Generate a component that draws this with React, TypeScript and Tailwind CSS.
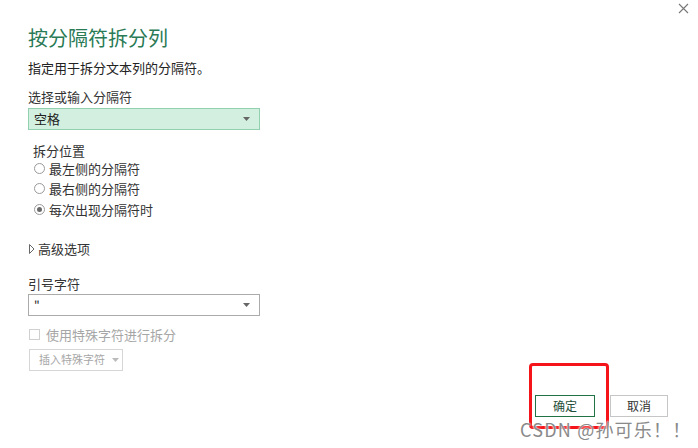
import React from "react";

const font = { fontFamily: '"Microsoft YaHei","Noto Sans CJK SC","Noto Sans",sans-serif' };

function Radio({ checked, label }: { checked?: boolean; label: string }) {
  return (
    <div className="flex items-center h-[20.5px]">
      <span className="w-[11px] h-[11px] rounded-full border border-[#9a9a9a] bg-white flex items-center justify-center ml-[6px]">
        {checked && <span className="w-[5px] h-[5px] rounded-full bg-[#6a6a6a]" />}
      </span>
      <span className="ml-[4px] text-[13px] text-[#333]">{label}</span>
    </div>
  );
}

function Caret({ color = "#666" }: { color?: string }) {
  return (
    <svg width="7" height="4" viewBox="0 0 7 4">
      <path d="M0 0 L7 0 L3.5 4 Z" fill={color} />
    </svg>
  );
}

export default function App() {
  return (
    <div className="relative w-[698px] h-[448px] bg-white overflow-hidden" style={font}>
      <svg className="absolute left-[678px] top-[3px]" width="11" height="11" viewBox="0 0 11 11">
        <path d="M1 1 L10 10 M10 1 L1 10" stroke="#777" strokeWidth="1.1" />
      </svg>

      <div className="flex flex-col pl-[28px] pt-[26px]">
        <div className="text-[20px] leading-[24px] text-[#2a7a56]">按分隔符拆分列</div>
        <div className="mt-[9px] text-[13px] leading-[18px] text-[#222]">指定用于拆分文本列的分隔符。</div>
        <div className="mt-[12px] text-[13px] leading-[16px] text-[#333]">选择或输入分隔符</div>
        <div className="mt-[3px] w-[232px] h-[22px] bg-[#d3efe0] border border-[#92d0b0] flex items-center justify-between pl-[5px] pr-[9px]">
          <span className="text-[13px] text-[#222]">空格</span>
          <Caret />
        </div>

        <div className="mt-[13px] ml-[5px] text-[13px] leading-[16px] text-[#333]">拆分位置</div>
        <div className="flex flex-col mt-[-1px]">
          <Radio label="最左侧的分隔符" />
          <Radio label="最右侧的分隔符" />
          <Radio checked label="每次出现分隔符时" />
        </div>

        <div className="mt-[20px] flex items-center h-[18px]">
          <svg width="6" height="10" viewBox="0 0 6 10" className="ml-[1px]">
            <path d="M0.5 0.5 L5 5 L0.5 9.5 Z" fill="none" stroke="#666" strokeWidth="1" />
          </svg>
          <span className="ml-[3px] text-[13px] text-[#333]">高级选项</span>
        </div>

        <div className="mt-[18px] text-[13px] leading-[16px] text-[#333]">引号字符</div>
        <div className="mt-[2px] w-[232px] h-[22px] bg-white border border-[#ababab] flex items-center justify-between pl-[5px] pr-[9px]">
          <span className="text-[12px] text-[#222]">"</span>
          <Caret />
        </div>

        <div className="mt-[12px] flex items-center h-[14px]">
          <span className="ml-[1px] w-[11px] h-[11px] border border-[#d0d0d0] bg-white" />
          <span className="ml-[6px] text-[13px] text-[#a6a6a6] whitespace-nowrap">使用特殊字符进行拆分</span>
        </div>

        <div className="mt-[7px] ml-[1px] w-[94px] h-[22px] border border-[#d6d6d6] flex items-center pl-[9px] gap-[7px] whitespace-nowrap">
          <span className="text-[11px] text-[#a6a6a6]">插入特殊字符</span>
          <Caret color="#bbb" />
        </div>
      </div>

      <div className="absolute left-[535px] top-[395px] flex gap-[15px]">
        <div className="w-[60px] h-[22px] border border-[#217346] flex items-center justify-center text-[12px] text-[#1f4e3a]">确定</div>
        <div className="w-[58px] h-[22px] border border-[#c6c6c6] flex items-center justify-center text-[12px] text-[#333]">取消</div>
      </div>

      <div className="absolute left-[529px] top-[363px] w-[80px] h-[66px] border-[3px] border-[#f5141a] rounded-[4px]" />

      <div
        className="absolute left-[520px] top-[417px] text-[18px] leading-[24px] text-[#8a8a8a] tracking-[1.2px] whitespace-nowrap"
        style={{ textShadow: "0 0 2px #fff, 0 0 2px #fff" }}
      >
        CSDN @孙可乐！！
      </div>
    </div>
  );
}
